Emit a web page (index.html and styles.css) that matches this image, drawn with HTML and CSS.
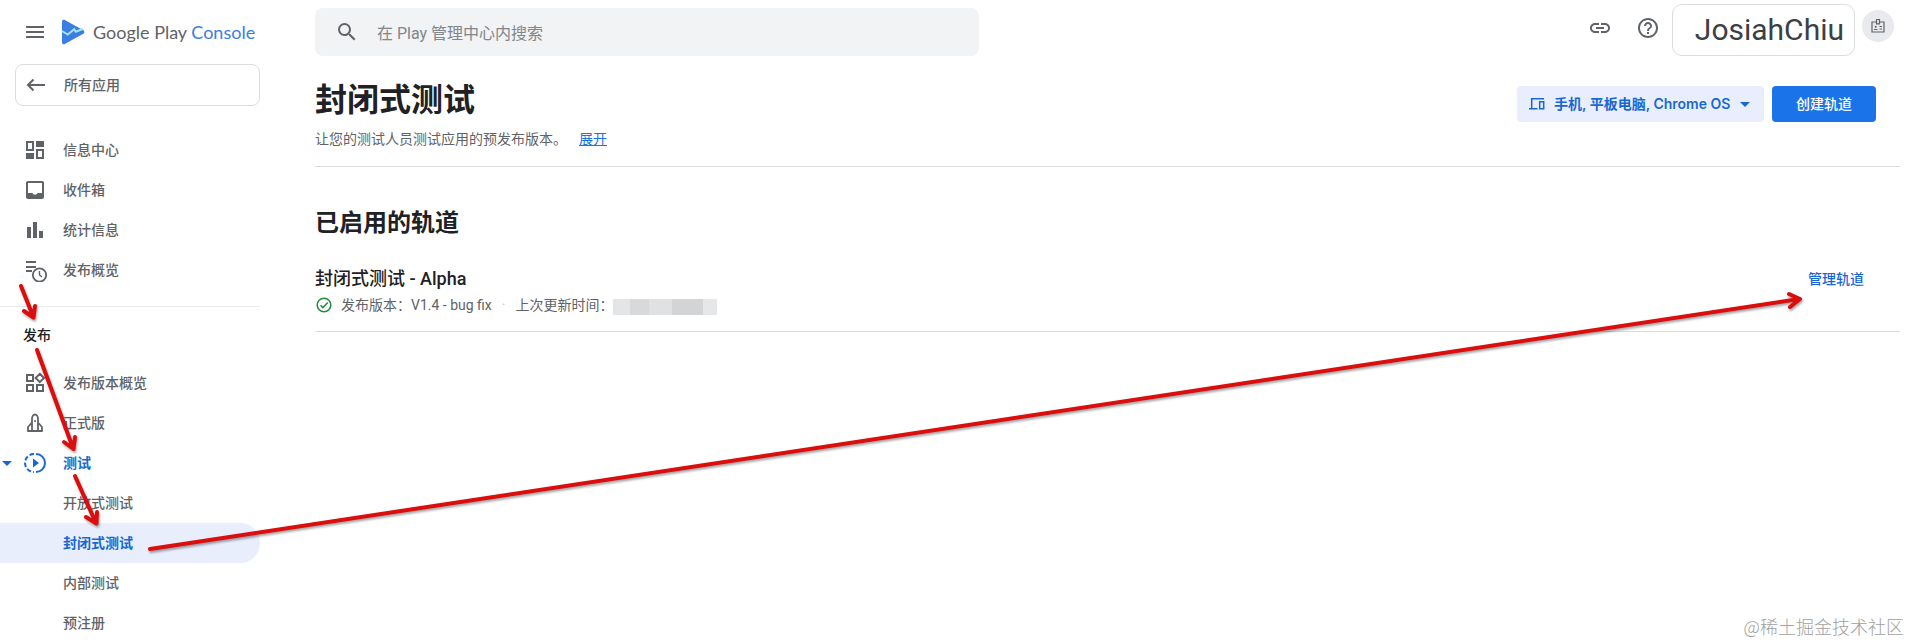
FILE: index.html
```html
<!DOCTYPE html>
<html lang="zh-CN">
<head>
	<meta charset="UTF-8">
	<meta name="viewport" content="width=device-width, initial-scale=1">
	<title>封闭式测试 | Google Play Console</title>
	<link rel="stylesheet" href="styles.css">
</head>
<body>
	<div class="app">
		<aside class="sidebar">
			<div class="brand">
				<button class="icon-btn" type="button" aria-label="菜单">
					<svg class="icon" viewBox="0 0 24 24"><path d="M3 18h18v-2H3v2zm0-5h18v-2H3v2zm0-7v2h18V6H3z"/></svg>
				</button>
				<a class="logo" href="#">
					<svg class="logo-mark" viewBox="0 0 24 26">
						<path fill="#3b7de0" d="M1 2.4C1 .9 2.500.3 3.800 1l18.500 10.300c1.400.8 1.400 2.600 0 3.400L3.800 25C2.500 25.700 1 25 1 23.600z"/>
						<path fill="none" stroke="#a6e3fb" stroke-width="2" d="M1 12l5.700 3.600 6.500-5.400 1.600 2.600 7.500-3"/>
					</svg>
					<span class="logo-text">Google Play <span class="logo-accent">Console</span></span>
				</a>
			</div>
			<a class="all-apps" href="#">
				<svg class="icon" viewBox="0 0 24 24"><path fill="none" stroke="currentColor" stroke-width="2" d="M21 12H4.500M9.500 6.500L4 12l5.500 5.500"/></svg>
				<span>所有应用</span>
			</a>
			<nav class="nav">
				<a class="nav-item" href="#">
					<svg class="icon" viewBox="0 0 24 24"><path d="M3 3h8v10H3zM5 5v6h4V5zM13 3h8v6h-8zM3 15h8v6H3zM13 11h8v10h-8zM15 13v6h4v-6z" fill-rule="evenodd"/></svg>
					<span>信息中心</span>
				</a>
				<a class="nav-item" href="#">
					<svg class="icon" viewBox="0 0 24 24"><path fill-rule="evenodd" d="M5 3h14c1.100 0 2 .9 2 2v14c0 1.100-.9 2-2 2H5c-1.100 0-2-.9-2-2V5c0-1.100.9-2 2-2zM5 5v10h4.500c.4 1 1.300 1.700 2.500 1.700s2.100-.7 2.500-1.700H19V5z"/></svg>
					<span>收件箱</span>
				</a>
				<a class="nav-item" href="#">
					<svg class="icon" viewBox="0 0 24 24"><path d="M4 9h4v11H4zM10 4h4v16h-4zM16 13h4v7h-4z"/></svg>
					<span>统计信息</span>
				</a>
				<a class="nav-item" href="#">
					<svg class="icon" viewBox="0 0 24 24"><path d="M3 3h10v2H3zM3 8h10v2H3zM3 12h6v2H3z"/><g fill="none" stroke="currentColor"><circle cx="16.500" cy="17" r="6.700" stroke-width="1.800"/><path stroke-width="1.400" d="M16.500 13v4l2.500 2"/></g></svg>
					<span>发布概览</span>
				</a>
			</nav>
			<h2 class="nav-title">发布</h2>
			<nav class="nav">
				<a class="nav-item" href="#">
					<svg class="icon" viewBox="0 0 24 24"><path fill="none" stroke="currentColor" stroke-width="2" d="M4 4h6v6H4zM4 14h6v6H4zM14 14h6v6h-6zM16.800 2.800L21 7l-4.200 4.200L12.600 7z"/></svg>
					<span>发布版本概览</span>
				</a>
				<a class="nav-item" href="#">
					<svg class="icon" viewBox="0 0 24 24"><path fill="none" stroke="currentColor" stroke-width="1.800" stroke-linejoin="round" d="M9 20V8c0-2.500 1.300-4.500 3-4.500S15 5.500 15 8v12M9 11.500L5 16v4h14v-4l-4-4.500M9 20v-4M15 20v-4"/><circle cx="12" cy="10" r="1"/></svg>
					<span>正式版</span>
				</a>
				<a class="nav-item open" href="#">
					<svg class="icon" viewBox="0 0 24 24"><path fill="none" stroke="currentColor" stroke-width="2" d="M13 3a9 9 0 0 1 0 18"/><path fill="none" stroke="currentColor" stroke-width="2" stroke-dasharray="4.600 2.200" d="M11 3a9 9 0 0 0 0 18"/><path d="M10 7.500v9l6-4.500z"/></svg>
					<span>测试</span>
				</a>
				<a class="nav-item sub" href="#"><span>开放式测试</span></a>
				<a class="nav-item sub active" href="#" aria-current="page"><span>封闭式测试</span></a>
				<a class="nav-item sub" href="#"><span>内部测试</span></a>
				<a class="nav-item sub" href="#"><span>预注册</span></a>
			</nav>
		</aside>

		<main class="main">
			<header class="topbar">
				<label class="search">
					<svg class="icon" viewBox="0 0 24 24"><path d="M15.500 14h-.79l-.28-.27A6.470 6.470 0 0 0 16 9.500 6.500 6.500 0 1 0 9.500 16c1.610 0 3.090-.59 4.230-1.570l.27.28v.79l5 4.990L20.490 19l-4.990-5zm-6 0C7.010 14 5 11.990 5 9.500S7.010 5 9.500 5 14 7.010 14 9.500 11.990 14 9.500 14z"/></svg>
					<input class="search-input" type="search" placeholder="在 Play 管理中心内搜索" aria-label="搜索">
				</label>
				<div class="tools">
					<button class="icon-btn" type="button" aria-label="链接">
						<svg class="icon" viewBox="0 0 24 24"><path d="M3.900 12c0-1.710 1.390-3.100 3.100-3.100h4V7H7c-2.760 0-5 2.240-5 5s2.240 5 5 5h4v-1.900H7c-1.710 0-3.100-1.390-3.100-3.100zM8 13h8v-2H8v2zm9-6h-4v1.900h4c1.710 0 3.100 1.390 3.100 3.100s-1.390 3.100-3.100 3.100h-4V17h4c2.760 0 5-2.240 5-5s-2.240-5-5-5z"/></svg>
					</button>
					<button class="icon-btn" type="button" aria-label="帮助">
						<svg class="icon" viewBox="0 0 24 24"><path d="M11 18h2v-2h-2v2zm1-16C6.480 2 2 6.480 2 12s4.480 10 10 10 10-4.480 10-10S17.520 2 12 2zm0 18c-4.410 0-8-3.590-8-8s3.590-8 8-8 8 3.590 8 8-3.590 8-8 8zm0-14c-2.210 0-4 1.790-4 4h2c0-1.100.9-2 2-2s2 .9 2 2c0 2-3 1.750-3 5h2c0-2.250 3-2.500 3-5 0-2.210-1.790-4-4-4z"/></svg>
					</button>
				</div>
				<button class="account" type="button">JosiahChiu</button>
				<span class="avatar">
					<svg viewBox="0 0 16 16"><g fill="none" stroke="currentColor" stroke-width="1.200"><path d="M6.500 4H2v10h12V4H9.500M6.500 1.500h3v4.300h-3z"/><path d="M4 11.500h3.500M9.500 8.500H12M9.500 11H12"/></g><circle cx="5.700" cy="8.800" r="1"/></svg>
				</span>
			</header>

			<section class="page-head">
				<div>
					<h1>封闭式测试</h1>
					<p class="desc">让您的测试人员测试应用的预发布版本。<a class="more" href="#">展开</a></p>
				</div>
				<div class="actions">
					<label class="device">
						<svg class="device-icon" viewBox="0 0 16 16"><g fill="none" stroke="currentColor" stroke-width="1.500"><path d="M15 2.700H2.700V12M0 12.700h8.500M10.700 5.700h4v7h-4z"/></g></svg>
						<select class="device-select" aria-label="设备类型">
							<option>手机, 平板电脑, Chrome OS</option>
						</select>
						<svg class="caret" viewBox="0 0 10 5"><path d="M0 0h10L5 5z"/></svg>
					</label>
					<button class="primary" type="button">创建轨道</button>
				</div>
			</section>

			<section class="tracks">
				<h2>已启用的轨道</h2>
				<div class="track">
					<div>
						<h3>封闭式测试 - Alpha</h3>
						<p class="meta">
							<svg class="check" viewBox="0 0 16 16"><g fill="none" stroke="currentColor" stroke-width="1.500"><circle cx="8" cy="8" r="6.800"/><path d="M4.500 8.200l2.400 2.400 4.900-5"/></g></svg>
							<span>发布版本：V1.4 - bug fix</span>
							<span class="dot">·</span>
							<span>上次更新时间：</span>
							<span class="redacted"></span>
						</p>
					</div>
					<a class="manage" href="#">管理轨道</a>
				</div>
			</section>
		</main>
	</div>

	<!-- arrows: where to click, in order -->
	<svg class="arrows" width="1911" height="644" viewBox="0 0 1911 644">
		<path d="M21 286L33 316M24 311l9.500 6.500L35 306"/>
		<path d="M37 350L73 448M64 442l9.500 7L75 437"/>
		<path d="M75 476L96 523M86 517l10.500 6.500L97 512"/>
		<path d="M150 549L1799 299M1789 294l11 5-10 8"/>
	</svg>
	<span class="watermark">@稀土掘金技术社区</span>
</body>
</html>
```
FILE: styles.css
```css
* {
	box-sizing: border-box;
}
body {
	margin: 0;
	background: #fff;
	color: #5f6368;
	font-family: Roboto, "Noto Sans CJK SC", sans-serif;
	font-size: 14px;
	line-height: 20px;
	position: relative;
	overflow-x: hidden;
}
h1, h2, h3, p {
	margin: 0;
	font-weight: 500;
	color: #202124;
}
a {
	color: inherit;
	text-decoration: none;
}
button, input, select {
	font: inherit;
	color: inherit;
	border: none;
	background: none;
	padding: 0;
	margin: 0;
	outline: none;
}
button {
	cursor: pointer;
}
svg {
	display: block;
	fill: currentColor;
	flex: none;
}
.icon {
	width: 24px;
	height: 24px;
}
.app {
	display: flex;
	min-height: 100vh;
}

/* sidebar */
.sidebar {
	width: 260px;
	flex: none;
}
.brand {
	display: flex;
	align-items: center;
	height: 64px;
	padding-left: 23px;
	gap: 14px;
}
.logo {
	display: flex;
	align-items: center;
	gap: 8px;
}
.logo-mark {
	width: 24px;
	height: 26px;
}
.logo-text {
	font-family: Lato, sans-serif;
	font-size: 18px;
}
.logo-accent {
	color: #3b7de0;
}
.all-apps {
	display: flex;
	align-items: center;
	gap: 16px;
	height: 42px;
	margin: 0 0 24px 15px;
	padding-left: 8px;
	border: 1px solid #dadce0;
	border-radius: 8px;
	font-weight: 500;
}
.nav-item {
	display: flex;
	align-items: center;
	gap: 16px;
	height: 40px;
	padding-left: 23px;
	font-weight: 500;
	position: relative;
}
.nav-item.sub {
	padding-left: 63px;
}
.nav-item.open, .nav-item.active {
	color: #1967d2;
	font-weight: 700;
}
.nav-item.active {
	background: #e8eefc;
	border-radius: 0 20px 20px 0;
}
.nav-item.open::before {
	content: "";
	position: absolute;
	left: 2px;
	border: 5px solid transparent;
	border-top-color: #1967d2;
	border-bottom: none;
}
.nav-title {
	margin-top: 16px;
	padding: 18px 23px;
	border-top: 1px solid #e8eaed;
	font-size: 14px;
	line-height: 20px;
}

/* main column */
.main {
	flex: 1;
	min-width: 0;
	padding: 0 11px 0 55px;
}
.topbar {
	display: flex;
	align-items: center;
	height: 60px;
}
.search {
	display: flex;
	align-items: center;
	gap: 18px;
	width: 664px;
	height: 48px;
	margin-top: 4px;
	padding: 0 20px;
	background: #f1f3f4;
	border-radius: 8px;
}
.search-input {
	flex: 1;
	padding-top: 4px;
	font-size: 16px;
	line-height: 24px;
}
.search-input::placeholder {
	color: #80868b;
	opacity: 1;
}
.tools {
	display: flex;
	gap: 24px;
	margin: 0 12px 4px auto;
}
.account {
	height: 52px;
	padding: 0 10px 0 22px;
	border: 1px solid #dadce0;
	border-radius: 10px;
	color: #3c4043;
	font-size: 30px;
	line-height: 40px;
}
.avatar {
	display: flex;
	align-items: center;
	justify-content: center;
	width: 32px;
	height: 32px;
	margin: 0 6px 8px 7px;
	border-radius: 50%;
	background: #e8eaed;
}
.avatar svg {
	width: 16px;
	height: 16px;
}
.page-head {
	display: flex;
	justify-content: space-between;
	padding: 20px 0 17px;
	border-bottom: 1px solid #dadce0;
}
h1 {
	font-size: 32px;
	font-weight: 700;
	line-height: 40px;
}
.desc {
	margin-top: 9px;
	font-weight: 400;
	color: #5f6368;
}
.more {
	margin-left: 12px;
	color: #1a73e8;
	text-decoration: underline;
}
.actions {
	display: flex;
	gap: 8px;
	margin: 6px 24px 0 0;
	height: 36px;
	font-weight: 500;
}
.device {
	display: flex;
	align-items: center;
	gap: 9px;
	padding: 0 14px 0 12px;
	border-radius: 4px;
	background: #e8eefc;
	color: #1967d2;
}
.device-icon {
	width: 16px;
	height: 16px;
}
.device-select {
	appearance: none;
	font-family: Inter, "Noto Sans CJK SC", sans-serif;
	font-weight: 600;
}
.caret {
	width: 10px;
	height: 5px;
}
.primary {
	padding: 0 24px;
	border-radius: 4px;
	background: #1a73e8;
	color: #fff;
}
.tracks {
	padding-top: 40px;
}
.tracks h2 {
	font-size: 24px;
	font-weight: 700;
	line-height: 32px;
}
.track {
	display: flex;
	justify-content: space-between;
	margin-top: 26px;
	padding-bottom: 16px;
	border-bottom: 1px solid #dadce0;
}
.track h3 {
	font-size: 18px;
	line-height: 28px;
}
.meta {
	display: flex;
	align-items: center;
	margin-top: 2px;
	font-weight: 400;
	color: #5f6368;
}
.check {
	width: 16px;
	height: 16px;
	margin: 0 9px 0 1px;
	color: #1e8e3e;
}
.dot {
	margin: 0 10px;
	color: #bdc1c6;
}
.redacted {
	width: 104px;
	height: 16px;
	margin: 4px 0 0;
	background: linear-gradient(90deg, #e4e5e6 0 16%, #d8d9da 16% 35%, #e0e1e2 35% 57%, #d3d4d6 57% 87%, #e6e7e8 87%);
}
.manage {
	margin: 4px 36px 0 0;
	font-weight: 500;
	color: #1967d2;
}

/* overlays */
.arrows {
	position: absolute;
	top: 0;
	left: 0;
	fill: none;
	stroke: #dc0d0d;
	stroke-width: 4;
	stroke-linecap: round;
	stroke-linejoin: round;
	filter: drop-shadow(1px 2px 1px rgba(0, 0, 0, 0.35));
	pointer-events: none;
}
.watermark {
	position: absolute;
	right: 7px;
	bottom: 6px;
	font-family: "Noto Sans CJK SC", sans-serif;
	font-size: 18px;
	font-weight: 300;
	line-height: 24px;
	color: #a0a0a0;
}
```
